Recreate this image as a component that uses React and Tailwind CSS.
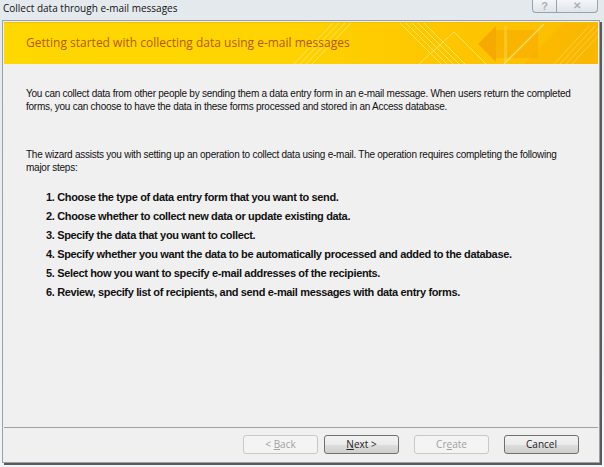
import React from "react";

function Banner() {
  return (
    <div className="relative h-[42px] overflow-hidden bg-[linear-gradient(90deg,#ffd800_0%,#ffd400_45%,#fec800_70%,#fbbd00_100%)]">
      <svg className="absolute inset-0" width="594" height="42" viewBox="0 0 594 42">
        <g stroke="#fff3a0" strokeWidth="1" opacity="0.6">
          <line x1="290" y1="42" x2="330" y2="0" />
          <line x1="296" y1="42" x2="336" y2="0" />
          <line x1="302" y1="42" x2="342" y2="0" />
          <line x1="308" y1="42" x2="348" y2="0" />
          <line x1="395" y1="0" x2="437" y2="42" />
          <line x1="401" y1="0" x2="443" y2="42" />
          <line x1="407" y1="0" x2="449" y2="42" />
          <line x1="413" y1="0" x2="455" y2="42" />
          <line x1="419" y1="0" x2="461" y2="42" />
          <line x1="415" y1="42" x2="450" y2="10" />
          <line x1="450" y1="10" x2="482" y2="42" />
          <line x1="550" y1="42" x2="585" y2="4" />
          <line x1="556" y1="42" x2="591" y2="4" />
          <line x1="562" y1="42" x2="594" y2="7" />
          <line x1="568" y1="42" x2="594" y2="14" />
        </g>
        <polygon points="474,22 492,4 492,40" fill="#f4a300" opacity="0.8" />
        <rect x="492" y="8" width="42" height="28" fill="#f6aa00" opacity="0.6" />
        <rect x="500" y="4" width="3" height="36" fill="#ffd64a" opacity="0.5" />
        <line x1="500" y1="42" x2="540" y2="2" stroke="#ffe680" strokeWidth="1.5" opacity="0.8" />
        <polygon points="560,0 594,0 594,42 520,42" fill="#f7a800" opacity="0.3" />
        <rect x="0" y="0" width="594" height="1" fill="#f0c000" />
      </svg>
      <div className="relative flex h-full items-center pl-[22px] text-[12px] text-[#b5580b] [font-family:'Open_Sans',sans-serif]">
        Getting started with collecting data using e-mail messages
      </div>
    </div>
  );
}

function Btn({ children, disabled }) {
  return (
    <div
      className={
        "flex h-[19px] w-[75px] items-center justify-center rounded-[3px] border text-[10px] [font-family:'Open_Sans',sans-serif] " +
        (disabled
          ? "border-[#c8c8c8] bg-[#f4f4f4] text-[#a0a0a0]"
          : "border-[#707070] bg-[linear-gradient(#f2f2f2_0%,#ebebeb_50%,#dddddd_51%,#cfcfcf_100%)] text-[#222]")
      }
    >
      <span>{children}</span>
    </div>
  );
}

export default function App() {
  const steps = [
    "1. Choose the type of data entry form that you want to send.",
    "2. Choose whether to collect new data or update existing data.",
    "3. Specify the data that you want to collect.",
    "4. Specify whether you want the data to be automatically processed and added to the database.",
    "5. Select how you want to specify e-mail addresses of the recipients.",
    "6. Review, specify list of recipients, and send e-mail messages with data entry forms.",
  ];
  return (
    <div className="flex h-[467px] w-[604px] flex-col overflow-hidden bg-[linear-gradient(#e4e9ee,#f2f5f8)] [font-family:'Liberation_Sans',sans-serif]">
      <div className="relative flex h-[20px] items-start">
        <div className="pl-[3px] pt-[1px] text-[10px] text-[#111] [font-family:'Open_Sans',sans-serif]">
          Collect data through e-mail messages
        </div>
        <div className="absolute right-[6px] top-0 flex h-[13px] overflow-hidden rounded-b-[4px] border border-t-0 border-[#9aa3ad] bg-[linear-gradient(#f4f6f8,#dfe4ea)]">
          <div className="flex w-[24px] items-center justify-center border-r border-[#9aa3ad] text-[11px] font-bold leading-none text-[#aab0b7]">?</div>
          <div className="flex w-[40px] items-center justify-center text-[10px] font-bold leading-none text-[#aab0b7]">✕</div>
        </div>
      </div>
      <div className="mb-[4px] ml-[2px] mr-[4px] flex flex-1 flex-col border border-[#9aa0a8] bg-[#f0f0f0] p-px shadow-[2px_2px_0_#5a5a5a]">
        <Banner />
        <div className="flex flex-1 flex-col pl-[22px] pr-[10px] pt-[23px] text-[10px] leading-[13px] tracking-[-0.25px] text-[#111]">
          <p>
            You can collect data from other people by sending them a data entry form in an e-mail message. When users return the completed forms, you can choose to have the data in these forms processed and stored in an Access database.
          </p>
          <p className="mt-[35px]">
            The wizard assists you with setting up an operation to collect data using e-mail. The operation requires completing the following
            <br />
            major steps:
          </p>
          <ol className="mt-[14px] pl-[20px] text-[11px] font-bold leading-[19px] tracking-[-0.35px]">
            {steps.map((s) => (
              <li key={s}>{s}</li>
            ))}
          </ol>
        </div>
        <div className="flex h-[34px] items-start gap-[6px] border-t border-[#a0a0a0] pl-[239px] pt-[7px]">
          <Btn disabled>&lt; <u>B</u>ack</Btn>
          <Btn><u>N</u>ext &gt;</Btn>
          <div className="ml-[9px]"><Btn disabled>Cr<u>e</u>ate</Btn></div>
          <div className="ml-[9px]"><Btn>Cancel</Btn></div>
        </div>
      </div>
    </div>
  );
}
